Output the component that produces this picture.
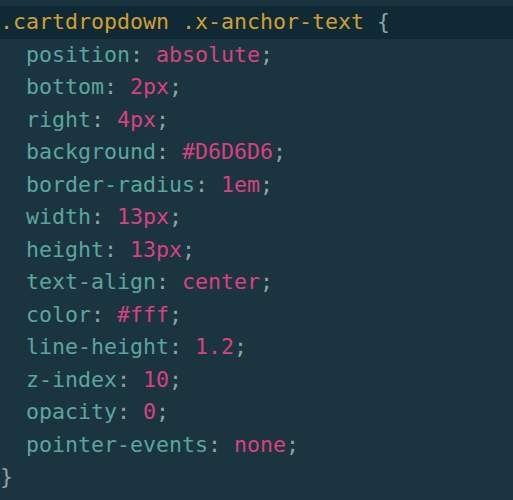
import React from "react";

const P = "text-[#5aa69e]";
const V = "text-[#d9417f]";
const X = "text-[#93a1a1]";

const rows: [string, string][] = [
  ["position", "absolute"],
  ["bottom", "2px"],
  ["right", "4px"],
  ["background", "#D6D6D6"],
  ["border-radius", "1em"],
  ["width", "13px"],
  ["height", "13px"],
  ["text-align", "center"],
  ["color", "#fff"],
  ["line-height", "1.2"],
  ["z-index", "10"],
  ["opacity", "0"],
  ["pointer-events", "none"],
];

export default function App() {
  return (
    <div
      className="w-[513px] h-[500px] overflow-hidden bg-[#1a3540] pt-[6px] text-[21.6px] leading-[32.5px] whitespace-pre"
      style={{ fontFamily: '"DejaVu Sans Mono", monospace' }}
    >
      <div className="bg-[#0f2a35] h-[32.5px]">
        <span className="text-[#d29e2e]">.cartdropdown .x-anchor-text </span>
        <span className={X}>{"{"}</span>
      </div>
      {rows.map(([k, v]) => (
        <div key={k} className="h-[32.5px]">
          <span className={P}>{"  " + k}</span>
          <span className={X}>: </span>
          <span className={V}>{v}</span>
          <span className={X}>;</span>
        </div>
      ))}
      <div className="h-[32.5px]">
        <span className={X}>{"}"}</span>
      </div>
    </div>
  );
}
